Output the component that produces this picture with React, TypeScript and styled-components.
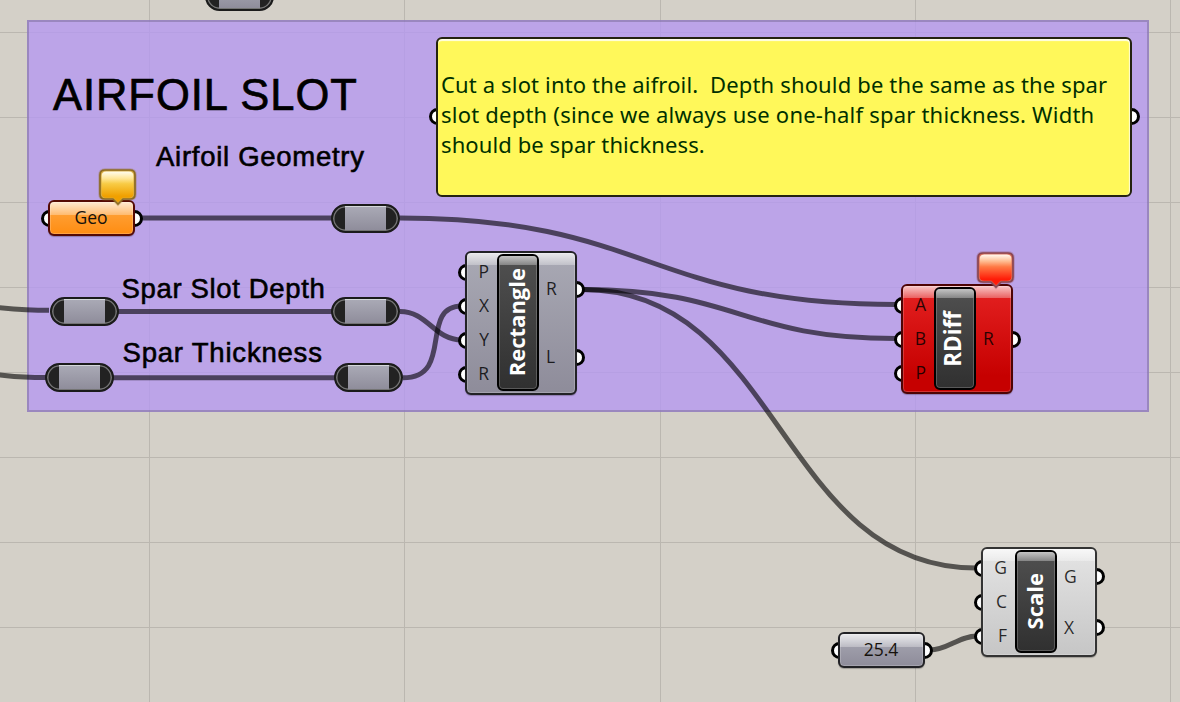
import React from "react";
import styled, { createGlobalStyle, css } from "styled-components";

const Global = createGlobalStyle`
  body { margin: 0; overflow: hidden; background: #d4d0c8; }
  * { box-sizing: border-box; }
`;

const Canvas = styled.main`
  position: relative;
  width: 1180px;
  height: 702px;
  overflow: hidden;
  background: #d4d0c8;
`;

const Layer = styled.svg`
  position: absolute;
  inset: 0;
  display: block;
`;

const Placed = styled.div<{ $x: number; $y: number }>`
  position: absolute;
  left: ${(p) => p.$x}px;
  top: ${(p) => p.$y}px;
  isolation: isolate;
`;

const Group = styled.div`
  width: 1122px;
  height: 392px;
  border: 2px solid rgba(75, 70, 95, 0.3);
  background: rgba(181, 153, 240, 0.8);
`;

const Note = styled.div<{ $size: number; $spacing: number; $weight: number }>`
  font: ${(p) => p.$size}px/1 "Liberation Sans", Arial, sans-serif;
  letter-spacing: ${(p) => p.$spacing}px;
  white-space: nowrap;
  color: #000;
  -webkit-text-stroke: ${(p) => p.$weight}px #000;
`;

const Port = styled.i<{ $side: "left" | "right" }>`
  position: absolute;
  z-index: -1;
  top: calc(50% - 8.5px);
  ${(p) => (p.$side === "left" ? "left: -9.5px" : "right: -10px")};
  width: 17px;
  height: 17px;
  border: 3px solid #000;
  border-radius: 50%;
  background: #fff;
`;

const Panel = styled.section`
  position: relative;
  display: flex;
  flex-direction: column;
  justify-content: center;
  width: 696px;
  height: 160px;
  padding: 0 0 7px 3px;
  border: 2px solid #24230f;
  border-radius: 6px;
  background: #fff85a;
  box-shadow: inset 0 2px 1px rgba(255, 255, 255, 0.85), inset -1px 0 1px rgba(255, 255, 255, 0.7);
  ${Port} { top: calc(50% - 9.5px); }
`;

const PanelLine = styled.span<{ $spacing: number }>`
  display: block;
  font: 22px/30px "Noto Sans", "Open Sans", sans-serif;
  letter-spacing: ${(p) => p.$spacing}px;
  white-space: pre;
  color: #003000;
`;

const tones = {
  grey: css`
    border-color: #222226;
    background: linear-gradient(#a9a9b4, #8e8c9a);
  `,
  light: css`
    border-color: #333;
    background: linear-gradient(#e4e4e4, #c6c6c6);
  `,
  red: css`
    border-color: #4e0404;
    background: linear-gradient(#e52222, #c60000 85%);
  `,
  orange: css`
    border-color: #550a04;
    background: linear-gradient(#ffa845, #ff8d12);
  `,
};
type Tone = keyof typeof tones;

const Body = styled.div<{ $tone: Tone; $w: number; $h: number; $gloss: number }>`
  position: relative;
  display: flex;
  width: ${(p) => p.$w}px;
  height: ${(p) => p.$h}px;
  border: 2px solid;
  border-radius: 6px;
  ${(p) => tones[p.$tone]}
  background-clip: padding-box;
  background-color: #2a2224;
  box-shadow: inset 0 0 0 1px rgba(255, 255, 255, 0.2), 0 1px 1px rgba(0, 0, 0, 0.25);
  &::before {
    content: "";
    position: absolute;
    inset: 0 0 auto;
    height: ${(p) => p.$gloss}px;
    border-radius: 4px 4px 0 0;
    background: linear-gradient(rgba(255, 255, 255, 0.75), rgba(255, 255, 255, 0.3));
  }
`;

const Column = styled.div<{ $side: "left" | "right"; $w: number }>`
  display: flex;
  flex-direction: column;
  width: ${(p) => p.$w}px;
  padding: 2px 0;
`;

const Slot = styled.div<{ $side: "left" | "right" }>`
  position: relative;
  flex: 1;
  display: flex;
  align-items: center;
  justify-content: ${(p) => (p.$side === "left" ? "flex-end" : "flex-start")};
  padding: ${(p) => (p.$side === "left" ? "0 8px 0.5px 0" : "0 0 0.5px 7px")};
  font: 17.5px/1 "Open Sans", "Noto Sans", sans-serif;
  color: rgba(0, 0, 0, 0.82);
`;

const Core = styled.div`
  position: relative;
  display: flex;
  align-items: center;
  justify-content: center;
  width: 42px;
  margin: 1px 0 2px;
  border: 2px solid #000;
  border-radius: 6px;
  background: linear-gradient(#505050, #303030);
  box-shadow: inset 0 0 0 1px rgba(255, 255, 255, 0.2);
  &::before {
    content: "";
    position: absolute;
    inset: 0 0 auto;
    height: 9px;
    border-radius: 4px 4px 0 0;
    background: linear-gradient(#c4c4c4, #858585);
  }
`;

const CoreName = styled.b<{ $size: number }>`
  position: relative;
  padding-left: 4px;
  writing-mode: vertical-rl;
  transform: rotate(180deg);
  font: 700 ${(p) => p.$size}px/1 "Open Sans", "Noto Sans", sans-serif;
  color: #fff;
`;

const ParamText = styled.span`
  position: relative;
  margin: auto;
  padding: 0 1px 1px 0;
  font: 17.5px/1 "Open Sans", "Noto Sans", sans-serif;
  color: #16120c;
`;

const RelayBody = styled.div`
  position: relative;
  width: 69px;
  height: 29px;
  padding: 1px 12px;
  border: 2px solid #1b1b1b;
  border-radius: 15px;
  background: #222;
  box-shadow: inset 0 0 0 1.5px #747474;
  overflow: hidden;
`;

const RelayFill = styled.div`
  height: 100%;
  background: linear-gradient(#a9a9b5, #8f8d9b);
  box-shadow: 0 -1px 0 #d4d8da;
`;

type PlaceProps = { x: number; y: number };

const Relay = ({ x, y }: PlaceProps) => (
  <Placed $x={x} $y={y}>
    <RelayBody>
      <RelayFill />
    </RelayBody>
  </Placed>
);

const Param = ({ x, y, tone, children }: PlaceProps & { tone: Tone; children: string }) => (
  <Placed $x={x} $y={y}>
    <Body $tone={tone} $w={87} $h={36} $gloss={13}>
      <Port $side="left" />
      <ParamText>{children}</ParamText>
      <Port $side="right" />
    </Body>
  </Placed>
);

type NodeProps = PlaceProps & {
  name: string;
  tone: Tone;
  w: number;
  h: number;
  lead: number;
  size: number;
  inputs: string[];
  outputs: string[];
};

const Node = ({ x, y, name, tone, w, h, lead, size, inputs, outputs }: NodeProps) => (
  <Placed $x={x} $y={y}>
    <Body $tone={tone} $w={w} $h={h} $gloss={12}>
      <Column $side="left" $w={lead}>
        {inputs.map((t) => (
          <Slot key={t} $side="left">
            <Port $side="left" />
            {t}
          </Slot>
        ))}
      </Column>
      <Core>
        <CoreName $size={size}>{name}</CoreName>
      </Core>
      <Column $side="right" $w={w - 46 - lead}>
        {outputs.map((t) => (
          <Slot key={t} $side="right">
            {t}
            <Port $side="right" />
          </Slot>
        ))}
      </Column>
    </Body>
  </Placed>
);

const balloonPath =
  "M7 2 H32 Q37 2 37 7 V26 Q37 31 32 31 H25 L20 36 L15 31 H7 Q2 31 2 26 V7 Q2 2 7 2 Z";

const Balloon = ({ x, y, id, stops, edge, rim }: PlaceProps & { id: string; stops: string[]; edge: string; rim: string }) => (
  <Placed $x={x} $y={y}>
    <svg width="40" height="40" display="block">
      <defs>
        <linearGradient id={id} x1="0" y1="0" x2="0" y2="1">
          <stop offset="0" stopColor={stops[0]} />
          <stop offset="0.22" stopColor={stops[1]} />
          <stop offset="0.4" stopColor={stops[2]} />
          <stop offset="0.8" stopColor={stops[3]} />
          <stop offset="1" stopColor={stops[3]} />
        </linearGradient>
      </defs>
      <path d={balloonPath} fill={rim} stroke={edge} strokeOpacity="0.3" strokeWidth="3.500" />
      <path d={balloonPath} fill={rim} stroke={edge} strokeWidth="1.700" />
      <path d={balloonPath} fill={`url(#${id})`} transform="translate(1.800 1.600) scale(.91)" />
    </svg>
  </Placed>
);

const gridX = [149.5, 404.5, 660.5, 915.5, 1170.5];
const gridY = [32.5, 117.5, 202.5, 287.5, 372.5, 457.5, 542.5, 627.5];

const wires = [
  "M140 218 H332",
  "M118 311.500 H332",
  "M113 377.800 H336",
  "M-60 303 C-25 303 0 310.300 49 310.300",
  "M-60 367 C-25 367 -15 377.600 46 377.600",
  "M400 218 C648 218 648 304.500 896 304.500",
  "M400 311.500 C428 311.500 434 340 462 340",
  "M403 377.800 C455 377.800 418 306 462 306",
  "M583 289.500 C740 289.500 740 338.500 896 338.500",
  "M583 289.500 C780 289.500 780 568 976 568",
  "M930 650 C948 650 958 636 978 636",
];

export default function App() {
  return (
    <>
      <Global />
      <Canvas>
        <Layer width="1180" height="702" stroke="#bbb7b0" strokeWidth="1">
          {gridX.map((x) => (
            <path key={x} d={`M${x} 0V702`} />
          ))}
          {gridY.map((y) => (
            <path key={y} d={`M0 ${y}H1180`} />
          ))}
        </Layer>

        <Placed $x={27} $y={20}>
          <Group />
        </Placed>

        <Layer width="1180" height="702" fill="none" stroke="#000" strokeOpacity="0.6" strokeWidth="5">
          {wires.map((d) => (
            <path key={d} d={d} />
          ))}
        </Layer>

        <Placed $x={53} $y={74}>
          <Note $size={43.5} $spacing={0.95} $weight={0.7}>AIRFOIL SLOT</Note>
        </Placed>
        <Placed $x={156} $y={143}>
          <Note $size={27.5} $spacing={0.72} $weight={0.6}>Airfoil Geometry</Note>
        </Placed>
        <Placed $x={121.5} $y={275}>
          <Note $size={27.5} $spacing={0.65} $weight={0.6}>Spar Slot Depth</Note>
        </Placed>
        <Placed $x={122.5} $y={339}>
          <Note $size={27.5} $spacing={0.8} $weight={0.6}>Spar Thickness</Note>
        </Placed>

        <Placed $x={436} $y={37}>
          <Panel>
            <Port $side="left" />
            <PanelLine $spacing={0.15}>Cut a slot into the aifroil.  Depth should be the same as the spar</PanelLine>
            <PanelLine $spacing={0.22}>slot depth (since we always use one-half spar thickness. Width</PanelLine>
            <PanelLine $spacing={0.1}>should be spar thickness.</PanelLine>
            <Port $side="right" />
          </Panel>
        </Placed>

        <Relay x={205} y={-18} />
        <Relay x={331} y={204} />
        <Relay x={50} y={297} />
        <Relay x={331} y={297} />
        <Relay x={45} y={363} />
        <Relay x={334} y={363} />

        <Param x={48} y={200} tone="orange">Geo</Param>
        <Param x={838} y={632} tone="grey">25.4</Param>

        <Node x={465} y={251} w={112} h={144} lead={30} size={22} name="Rectangle" tone="grey" inputs={["P", "X", "Y", "R"]} outputs={["R", "L"]} />
        <Node x={901} y={284} w={112} h={110} lead={31} size={22.5} name="RDiff" tone="red" inputs={["A", "B", "P"]} outputs={["R"]} />
        <Node x={981} y={547} w={116} h={110} lead={32} size={22} name="Scale" tone="light" inputs={["G", "C", "F"]} outputs={["G", "X"]} />

        <Balloon x={98} y={168} id="warn" edge="#8d6b20" rim="#d9ad45" stops={["#fffdf0", "#ffe79a", "#f8cb45", "#f0a000"]} />
        <Balloon x={976} y={251} id="error" edge="#8a4650" rim="#d9705c" stops={["#fffaf2", "#ffbd92", "#ff7a45", "#ff1c08"]} />
      </Canvas>
    </>
  );
}
